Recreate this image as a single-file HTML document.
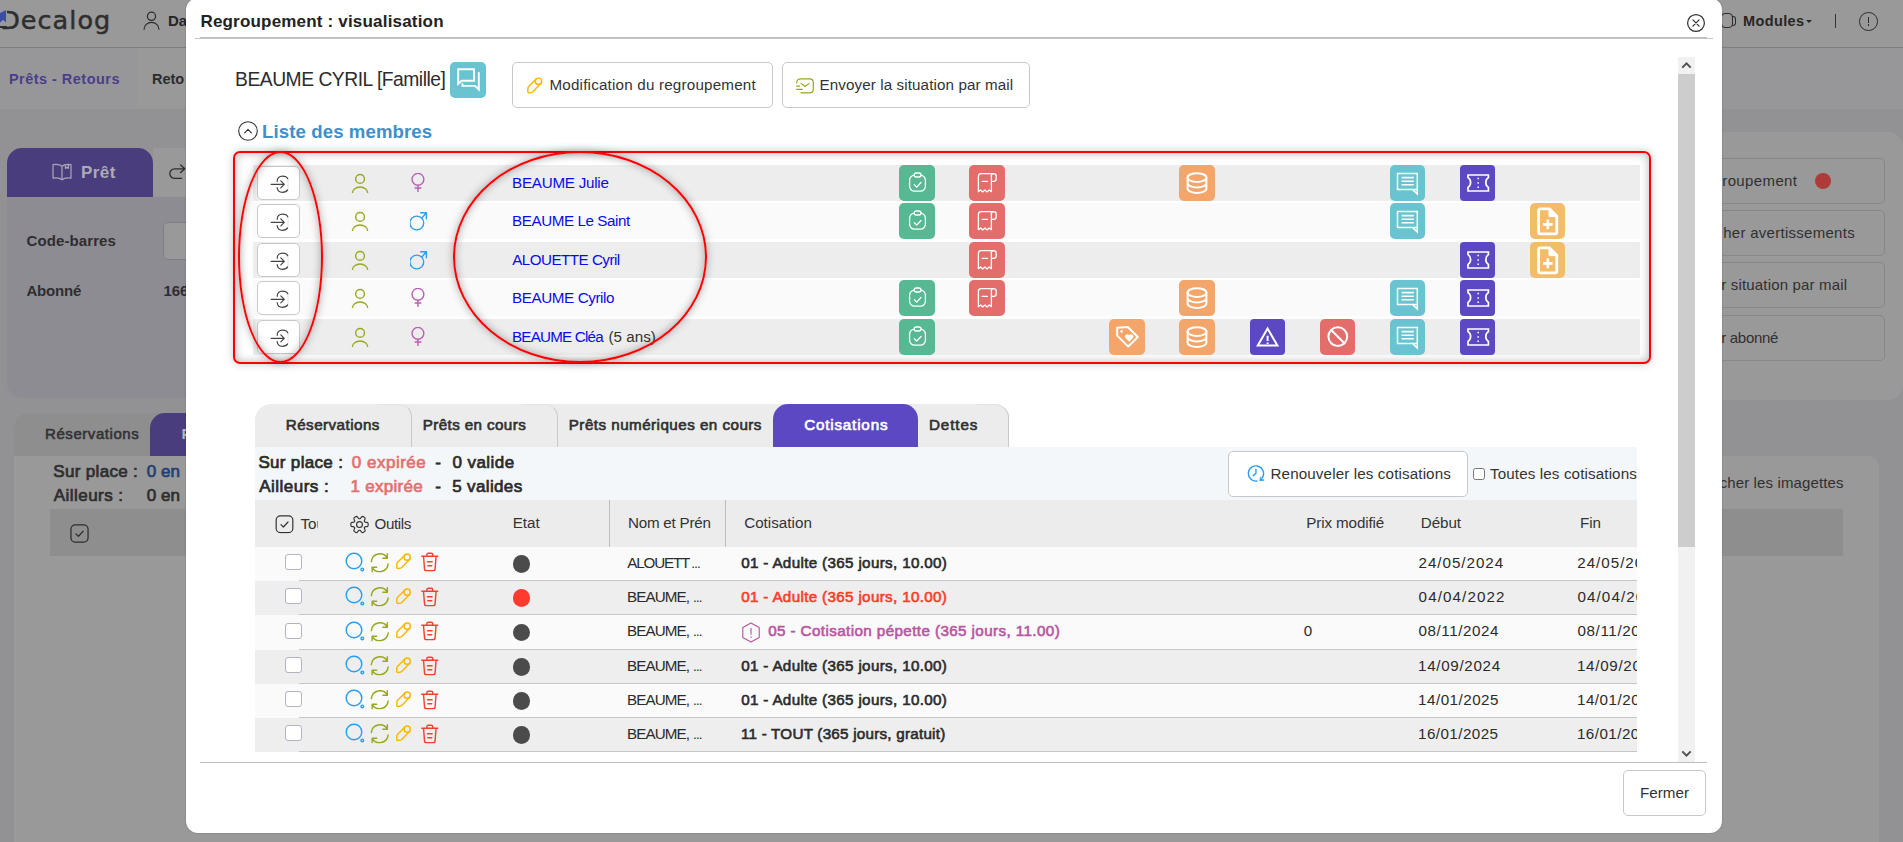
<!DOCTYPE html>
<html lang="fr"><head><meta charset="utf-8"><title>Regroupement : visualisation</title>
<style>
*{box-sizing:border-box}
html,body{margin:0;padding:0}
body{width:1903px;height:842px;overflow:hidden;position:relative;background:#929295;font-family:"Liberation Sans",sans-serif;color:#333}
.a{position:absolute}
.t{position:absolute;white-space:nowrap;line-height:1;color:#333}
svg{position:absolute;overflow:visible}
.ib{position:absolute;width:36px;height:36px;border-radius:5px}
.ib svg{left:0;top:0;width:36px;height:36px;fill:none;stroke:#fff;stroke-width:1.3;stroke-linecap:round;stroke-linejoin:round}
.n{width:35px}.g{background:#57b894}.r{background:#e36d6a}.o{background:#f4a56a}.p{background:#5c48c2;border-radius:4px}.c{background:#69c3d1}.y{background:#f2bc6b}
.mrow{position:absolute;left:253px;width:1387px;height:36px}
.rb{position:absolute;left:257px;width:42.7px;height:33.5px;border:1px solid #c9c9c9;border-radius:5px;background:#fff}
.btn{position:absolute;border:1px solid #c8c8c8;border-radius:5px;background:#fff}
.trow{position:absolute;left:255px;width:1382px}
.tline{position:absolute;left:299px;width:1338px;height:1px;background:#c6c6c6}
.cb{position:absolute;left:285.2px;width:16.5px;height:16.2px;border:1.8px solid #b3b3c2;border-radius:3px;background:#fff}
.dot{position:absolute;left:512.6px;width:17.4px;height:17.4px;border-radius:50%;background:#4b4b4b}
.bbtn{position:absolute;height:46px;border:1px solid #878789;border-radius:5px}
</style></head>
<body>

<svg width="0" height="0" style="position:absolute"><defs>
<symbol id="login" viewBox="0 0 19 19"><path d="M1.2 9.4H14.2M10.8 5.9 14.3 9.4l-3.5 3.5M7.2 6.3C7.2 3.2 9.4 1.1 12.4 1.1c2.6 0 4.6 .900 5.4 2.7M7.2 12.7c.300 2.8 2.4 4.6 5.2 4.6 2.4 0 4.3-.800 5.2-2.4"/><path d="M18 4.4v9.8" opacity=".12"/></symbol>
<symbol id="usr2" viewBox="0 0 18 20"><circle cx="9.06" cy="5.9" r="4.4"/><path d="M1.45 19.75a7.6 5.7 0 0 1 15.2 0"/></symbol>
<symbol id="user" viewBox="0 0 20 20"><circle cx="10" cy="5.6" r="4.3"/><path d="M2.2 19.2a7.8 7.2 0 0 1 15.6 0"/></symbol>
<symbol id="fem" viewBox="0 0 18 20"><circle cx="8.95" cy="6.3" r="5.9"/><path d="M8.95 12.2V18.4M6.1 15H11.9"/></symbol>
<symbol id="mal" viewBox="0 0 18 20"><circle cx="6.8" cy="12" r="6.9"/><path d="M11.7 7.1 16.4 1.8M10.6 1.8H16.4V7.8"/></symbol>
<symbol id="clip" viewBox="0 0 36 36"><rect x="10.6" y="10.2" width="15.8" height="16" rx="5"/><rect x="15.2" y="8" width="6.8" height="4" rx="2" fill="#57b894"/><path d="M15.4 19.8l2.3 2.3 4.3-4.6"/></symbol>
<symbol id="rcpt" viewBox="0 0 36 36"><path d="M9.4 26.6V11.4a2.8 2.8 0 0 1 2.8-2.8h12.6M22.4 26.6V11.6M9.4 26.6l2.2-1.6 2.1 1.9 2.2-1.9 2.2 1.9 2.1-1.9 2.2 1.6M22.4 16.4h2.2a2.6 2.6 0 0 0 2.6-2.6v-2.6a2.6 2.6 0 0 0-2.6-2.6 2.6 2.6 0 0 0-2.4 2.6M13.2 16.4h5.2"/></symbol>
<symbol id="tag" viewBox="0 0 36 36"><path d="M8.2 8.8v7.8l11 11 9.6-9.6-10-10z" stroke-width="2"/><circle cx="12.6" cy="12.4" r="1.4" fill="#fff" stroke="none"/><path d="M20.2 22.8l-3.7-3.7a2.3 2.3 0 0 1 3.3-3.2l.4.4.4-.4a2.3 2.3 0 0 1 3.3 3.2z" fill="#fff" stroke="none"/></symbol>
<symbol id="db" viewBox="0 0 36 36"><g stroke-width="2"><ellipse cx="18" cy="12.6" rx="9.4" ry="4.4"/><path d="M8.6 12.6v11c0 2.4 4.2 4.4 9.4 4.4s9.4-2 9.4-4.4v-11M8.6 18.1c0 2.4 4.2 4.4 9.4 4.4s9.4-2 9.4-4.4"/></g></symbol>
<symbol id="warn" viewBox="0 0 36 36"><path d="M17.6 9.6 7.8 26.4h19.6z" stroke-width="2" stroke-linejoin="miter"/><path d="M17.6 16.8v5.2M17.6 23.6v1.3" stroke-width="2" stroke-linecap="butt"/></symbol>
<symbol id="ban" viewBox="0 0 36 36"><circle cx="17.8" cy="17.6" r="9.4" stroke-width="2"/><path d="M11.2 11 24.4 24.2" stroke-width="2"/></symbol>
<symbol id="cmt" viewBox="0 0 36 36"><path d="M7.5 8.4h19.8v16H7.5zM22.4 24.4l4.9 4.6v-4.6" stroke-width="1.5" stroke-linejoin="miter"/><path d="M11.6 12.6h12.2M11.6 16.2h12.2M11.6 19.8h12.2" stroke-width="1.6" stroke-linecap="butt"/></symbol>
<symbol id="tkt" viewBox="0 0 36 36"><path d="M8 10h20.4v2.6c-1.6 1-2.6 2.8-2.6 4.9s1 3.9 2.6 4.9V26H8v-3.6c1.6-1 2.6-2.8 2.6-4.9S9.6 13.6 8 12.6z" stroke-width="1.7" stroke-linejoin="miter"/><path d="M18.2 12.8v1.5M18.2 17.2v1.5M18.2 21.6v1.5" stroke-width="1.5" stroke-linecap="butt"/></symbol>
<symbol id="doc" viewBox="0 0 36 36"><path d="M8.6 7.4a1.6 1.6 0 0 1 1.6-1.6h9.2l7.4 7.4v16a1.6 1.6 0 0 1-1.6 1.6h-15a1.6 1.6 0 0 1-1.6-1.6z" stroke-width="2.8"/><path d="M19 5.8v7.8h7.8z" fill="#fff" stroke-width="1"/><path d="M17.8 16.6v9.6M13 21.4h9.6" stroke-width="2.6" stroke-linecap="butt"/></symbol>
<symbol id="forum" viewBox="0 0 36 36"><path d="M8.2 7.2h15.8v11.6H11.6L8.2 21.8z" stroke-width="1.9" stroke-linejoin="miter"/><path d="M28.8 11v16.6l-3.8-3.7H12.4v-2" stroke-width="1.9" stroke-linejoin="miter"/></symbol>
<symbol id="srch" viewBox="0 0 20 20"><circle cx="9" cy="9" r="7.8"/><circle cx="17.3" cy="17.4" r="1.3"/></symbol>
<symbol id="rfr" viewBox="0 0 20 20"><path d="M1.4 8.8A8.8 8.8 0 0 1 17.8 5.2M18.6 11.2A8.8 8.8 0 0 1 2.2 14.8M17.8 .8v4.6h-4.6M2.2 19.2v-4.6h4.6"/></symbol>
<symbol id="pen" viewBox="0 0 16 17"><circle cx="11.5" cy="4.3" r="3.2"/><path d="M9.2 2 1.7 9.5C1.1 10.1.9 10.7.9 11.5L.8 14.5C.8 15.4 1.4 16 2.3 15.9L4.6 15.5C5.2 15.4 5.5 15.2 5.9 14.8L13.8 6.6"/></symbol>
<symbol id="trash" viewBox="0 0 18 20"><path d="M.8 4.4h16.4M6 4.2V2.8a1.6 1.6 0 0 1 1.6-1.6h2.8A1.6 1.6 0 0 1 12 2.8v1.4M2.6 4.6l1 12.6a2.2 2.2 0 0 0 2.2 2h6.4a2.2 2.2 0 0 0 2.2-2l1-12.6M6.6 10h4.8M7 14h4"/></symbol>
<symbol id="chk" viewBox="0 0 20 20"><rect x="1" y="1" width="18" height="18" rx="4.5"/><path d="M6.2 10.4l2.6 2.6 5-5.4"/></symbol>
<symbol id="gear" viewBox="0 0 20 20"><circle cx="10" cy="10" r="3.1"/><path d="M19.1 10.0L19.1 10.8L18.9 11.6L18.1 12.2L16.3 12.3L15.6 12.6L15.3 13.0L15.0 13.5L15.2 14.3L15.9 15.9L15.8 16.9L15.2 17.5L14.6 17.9L13.9 18.3L13.1 18.5L12.2 18.1L11.2 16.7L10.5 16.1L10.0 16.1L9.5 16.1L8.8 16.7L7.8 18.1L6.9 18.5L6.1 18.3L5.4 17.9L4.8 17.5L4.2 16.9L4.1 15.9L4.8 14.3L5.0 13.5L4.7 13.0L4.4 12.6L3.7 12.3L1.9 12.2L1.1 11.6L0.9 10.8L0.9 10.0L0.9 9.2L1.1 8.4L1.9 7.8L3.7 7.7L4.4 7.4L4.7 7.0L5.0 6.5L4.8 5.7L4.1 4.1L4.2 3.1L4.8 2.5L5.4 2.1L6.1 1.7L6.9 1.5L7.8 1.9L8.8 3.3L9.5 3.9L10.0 3.9L10.5 3.9L11.2 3.3L12.2 1.9L13.1 1.5L13.9 1.7L14.6 2.1L15.2 2.5L15.8 3.1L15.9 4.1L15.2 5.7L15.0 6.5L15.3 7.0L15.6 7.4L16.3 7.7L18.1 7.8L18.9 8.4L19.1 9.2z"/></symbol>
<symbol id="clk" viewBox="0 0 18 18"><path d="M15.53 12.3A7.6 7.6 0 1 0 10 16.03M8.95 4.2V8.3L6.3 10.6"/><path d="M13.5 12.2 12.7 15.8 16.8 15.4z" fill="#2a9ef0" stroke-width=".6"/></symbol>
<symbol id="mail" viewBox="0 0 19 17"><path d="M.7 5.2C.7 2.5 2.3 1 4.7 1H14.3c2.5 0 4 1.5 4 4v7c0 2.5-1.6 3.9-4 3.9H5.2M.6 8.6h3.3M.6 12h6.1M5.2 5.7l4.3 3.3 4.4-3.3"/></symbol>
<symbol id="hex" viewBox="0 0 18 21"><path d="M9 .9l8.2 4.7v9.8L9 20.1.8 15.4V5.6z"/><path d="M9 6.3v5.9M9 14.9v.6"/></symbol>
</defs></svg>

<!-- page behind the overlay -->
<main>
<div class="a" style="left:0;top:0;width:1903px;height:47px;background:#999"></div>
<div class="a" style="left:0;top:47px;width:1903px;height:1px;background:#7e7e7e"></div>
<div class="a" style="left:0;top:48px;width:1903px;height:61px;background:#979799"></div>
<div class="a" style="left:137px;top:48px;width:80px;height:61px;background:#999"></div>
<span class="t" style="left:0.14px;top:8px;font-size:25.5px;color:#2e2e2e;letter-spacing:1.047px;-webkit-text-stroke:.5px #2e2e2e;font-family:'DejaVu Sans',sans-serif;">Decalog</span>
<div class="a" style="left:0;top:9px;width:7px;height:16.9px;background:#999"></div>
<div class="a" style="left:0;top:25.9px;width:7px;height:2.6px;background:#2e2e2e"></div>
<div class="a" style="left:0;top:10px;width:6.2px;height:12.6px;background:#3a4d9f;clip-path:polygon(100% 0,100% 100%,50% 78%,0 100%,0 24%)"></div>
<svg style="left:141.5px;top:10.5px;fill:none;stroke:#2d2d2d;stroke-width:1.3;stroke-linecap:round;stroke-linejoin:round;" width="19" height="19"><use href="#user"/></svg>
<span class="t" style="left:167.98px;top:13px;font-size:15px;font-weight:700;color:#252525;">Da</span>
<span class="t" style="left:8.95px;top:72px;font-size:14.5px;font-weight:700;color:#4b3e8c;letter-spacing:0.471px;">Prêts - Retours</span>
<span class="t" style="left:151.95px;top:72px;font-size:14.5px;font-weight:700;color:#2b2b2b;">Reto</span>
<div class="a" style="left:1721px;top:13px;width:11.5px;height:15.2px;border:1.4px solid #2d2d2d;border-radius:4px"></div>
<div class="a" style="left:1731.5px;top:16px;width:4px;height:9.6px;border:1.4px solid #2d2d2d;border-left:0;border-radius:0 3px 3px 0"></div>
<span class="t" style="left:1742.95px;top:14px;font-size:14.5px;font-weight:700;color:#262626;letter-spacing:0.399px;">Modules</span>
<div class="a" style="left:1806px;top:19.5px;width:0;height:0;border:3px solid transparent;border-top:3.5px solid #262626"></div>
<div class="a" style="left:1835px;top:14px;width:1.3px;height:14px;background:#333"></div>
<div class="a" style="left:1859px;top:12px;width:18.5px;height:18.5px;border:1.3px solid #2d2d2d;border-radius:50%"></div>
<div class="a" style="left:1867.6px;top:16.5px;width:1.3px;height:6px;background:#2d2d2d"></div><div class="a" style="left:1867.6px;top:24px;width:1.3px;height:1.5px;background:#2d2d2d"></div>
<div class="a" style="left:153px;top:148px;width:120px;height:49px;background:#999"></div>
<div class="a" style="left:7px;top:197px;width:400px;height:200.5px;background:#8d8c93;border-radius:0 0 0 15px"></div>
<div class="a" style="left:7px;top:148px;width:146px;height:49px;background:#4a3d7e;border-radius:15px 15px 0 0"></div>
<svg style="left:52px;top:163px;fill:none;stroke:#a9a7b4;stroke-width:1.2;stroke-linejoin:round" width="20" height="19" viewBox="0 0 20 19"><path d="M10 3.2C8 1.4 4.6 1 1 1.6v13.6c3.6-.600 7-.200 9 1.6 2-1.8 5.4-2.2 9-1.6V1.6C15.4 1 12 1.4 10 3.2zM10 3.2v13.6M13.4 1.4v4l1.5-1.2 1.5 1.2V1"/></svg>
<span class="t" style="left:80.98px;top:164px;font-size:17px;font-weight:700;color:#adabb6;letter-spacing:0.419px;">Prêt</span>
<svg style="left:168px;top:164px;fill:none;stroke:#2d2d2d;stroke-width:1.3;stroke-linecap:round;stroke-linejoin:round" width="18" height="16" viewBox="0 0 18 16"><path d="M12.6 1l4.2 3.8-4.2 3.8M16.4 4.8H6.6a4.8 4.8 0 0 0 0 9.6h7"/></svg>
<span class="t" style="left:26.44px;top:233px;font-size:15px;font-weight:700;color:#2e2e31;letter-spacing:0.112px;">Code-barres</span>
<div class="a" style="left:163px;top:221.5px;width:200px;height:38.5px;background:#999;border:1px solid #7f7f83;border-radius:5px"></div>
<span class="t" style="left:26.40px;top:283px;font-size:15px;font-weight:700;color:#2e2e31;letter-spacing:-0.183px;">Abonné</span>
<span class="t" style="left:163.41px;top:283px;font-size:15px;font-weight:700;color:#2e2e31;">166</span>
<div class="a" style="left:14px;top:413px;width:400px;height:43px;background:#8e8e8e;border-radius:15px 0 0 0"></div>
<div class="a" style="left:14px;top:456px;width:1865px;height:400px;background:#999;border-radius:0 11px 0 0"></div>
<div class="a" style="left:150px;top:413px;width:200px;height:43px;background:#4a3d7e;border-radius:15px 0 0 0"></div>
<span class="t" style="left:45.06px;top:426px;font-size:15px;color:#333338;letter-spacing:0.554px;-webkit-text-stroke:.6px;">Réservations</span>
<span class="t" style="left:181.60px;top:426px;font-size:15px;font-weight:700;color:#b9b6c2;">Prêts en cours</span>
<span class="t" style="left:53.28px;top:463px;font-size:17px;color:#2e2e2e;letter-spacing:0.33px;-webkit-text-stroke:.7px;">Sur place :</span>
<span class="t" style="left:146.86px;top:463px;font-size:17px;color:#243f72;-webkit-text-stroke:.7px;">0 en</span>
<span class="t" style="left:53.70px;top:487px;font-size:17px;color:#2e2e2e;letter-spacing:0.463px;-webkit-text-stroke:.7px;">Ailleurs :</span>
<span class="t" style="left:146.86px;top:487px;font-size:17px;color:#2e2e2e;-webkit-text-stroke:.7px;">0 en</span>
<div class="a" style="left:50px;top:509px;width:300px;height:47px;background:#8e8e8e"></div>
<svg style="left:70px;top:524px;fill:none;stroke:#2d2d2d;stroke-width:1.3;stroke-linecap:round;stroke-linejoin:round;" width="19" height="19"><use href="#chk"/></svg>
<div class="a" style="left:1500px;top:132px;width:403px;height:268px;background:#999;border-radius:0 15px 15px 0"></div>
<div class="bbtn" style="left:1500px;top:158px;width:385px"></div>
<span class="t" style="left:1722.28px;top:173px;font-size:15px;color:#303030;letter-spacing:0.377px;">roupement</span>
<div class="bbtn" style="left:1500px;top:210px;width:385px"></div>
<span class="t" style="left:1723.23px;top:225px;font-size:15px;color:#303030;letter-spacing:0.279px;">her avertissements</span>
<div class="bbtn" style="left:1500px;top:262px;width:385px"></div>
<span class="t" style="left:1721.28px;top:277px;font-size:15px;color:#303030;letter-spacing:0.17px;">r situation par mail</span>
<div class="bbtn" style="left:1500px;top:314.5px;width:385px"></div>
<span class="t" style="left:1721.28px;top:330px;font-size:15px;color:#303030;letter-spacing:-0.303px;">r abonné</span>
<div class="a" style="left:1815px;top:173px;width:16px;height:16px;border-radius:50%;background:#ae3a3a"></div>
<span class="t" style="left:1719.66px;top:475px;font-size:15px;color:#303030;letter-spacing:0.122px;">cher les imagettes</span>
<div class="a" style="left:1500px;top:509px;width:343px;height:46.5px;background:#8e8e8e"></div>
</main>
<!-- modal dialog -->
<section role="dialog" aria-label="Regroupement : visualisation">
<div class="a" style="left:186px;top:-2px;width:1536px;height:835px;background:#fff;border-radius:12px;box-shadow:0 0 2px rgba(0,0,0,.25)"></div>
<span class="t" style="left:200.44px;top:13px;font-size:17px;font-weight:700;color:#222;letter-spacing:0.188px;">Regroupement : visualisation</span>
<svg style="left:1686.1px;top:12.7px;fill:none;stroke:#333;stroke-width:1.25;stroke-linecap:round" width="20" height="20" viewBox="0 0 20 20"><circle cx="10" cy="10" r="8.4"/><path d="M6.9 6.9l6.2 6.2M13.1 6.9l-6.2 6.2"/></svg>
<div class="a" style="left:200px;top:37px;width:1507px;height:2px;background:#bdbdbd"></div>
<div class="a" style="left:195px;top:38px;width:1518px;height:1px;background:#c4c4c4"></div>
<div class="a" style="left:1678px;top:57px;width:17px;height:705px;background:#f1f1f1"></div>
<div class="a" style="left:1678px;top:74px;width:17px;height:473px;background:#cdcdcd"></div>
<svg style="left:1678px;top:57px;fill:none;stroke:#505050;stroke-width:2" width="17" height="17" viewBox="0 0 17 17"><path d="M4.3 10.6l4.2-4.2 4.2 4.2"/></svg>
<svg style="left:1678px;top:745px;fill:none;stroke:#505050;stroke-width:2" width="17" height="17" viewBox="0 0 17 17"><path d="M4.3 6.4l4.2 4.2 4.2-4.2"/></svg>
<span class="t" style="left:235.03px;top:70px;font-size:19.3px;color:#2c2c2c;letter-spacing:-0.487px;">BEAUME CYRIL [Famille]</span>
<div class="ib c" style="left:449.5px;top:62px"><svg><use href="#forum"/></svg></div>
<div class="btn" style="left:512.3px;top:62px;width:260.4px;height:45.6px"></div>
<svg style="left:527px;top:76.5px;fill:none;stroke:#fdb608;stroke-width:1.45;stroke-linecap:round;stroke-linejoin:round;" width="16" height="17"><use href="#pen"/></svg>
<span class="t" style="left:549.44px;top:77px;font-size:15.2px;letter-spacing:0.197px;">Modification du regroupement</span>
<div class="btn" style="left:782px;top:62px;width:248px;height:45.6px"></div>
<svg style="left:795px;top:77.8px;fill:none;stroke:#97a71c;stroke-width:1.3;stroke-linecap:round;stroke-linejoin:round" width="20" height="16" viewBox="0 0 22 18"><use href="#mail"/></svg>
<span class="t" style="left:819.51px;top:77px;font-size:15.2px;letter-spacing:0.101px;">Envoyer la situation par mail</span>
<svg style="left:238px;top:121.3px;fill:none;stroke:#333;stroke-width:1.1;stroke-linecap:round;stroke-linejoin:round" width="20" height="20" viewBox="0 0 20 20"><circle cx="10" cy="10" r="9.3"/><path d="M6.6 11.8l3.4-3.4 3.4 3.4"/></svg>
<span class="t" style="left:262.02px;top:123px;font-size:18.6px;font-weight:700;color:#3f8fc8;letter-spacing:0.106px;">Liste des membres</span>
<div class="a" style="left:233px;top:150.5px;width:1417.5px;height:213px;border:2.2px solid #f00;border-radius:7px;box-shadow:0 0 9px rgba(0,0,0,.22),inset 0 0 10px rgba(0,0,0,.3)"></div>
<div class="mrow" style="top:165px;background:#ededed"></div>
<div class="rb" style="top:166.2px"></div>
<svg style="left:270px;top:174.5px;fill:none;stroke:#444;stroke-width:1.2;stroke-linecap:round;stroke-linejoin:round;" width="19" height="19"><use href="#login"/></svg>
<svg style="left:351px;top:173px;fill:none;stroke:#98a81c;stroke-width:1.4;stroke-linecap:round;stroke-linejoin:round;" width="18" height="20"><use href="#usr2"/></svg>
<svg style="left:409px;top:173.3px;fill:none;stroke:#b860b3;stroke-width:1.4;stroke-linecap:round;stroke-linejoin:round;" width="18" height="20"><use href="#fem"/></svg>
<span class="t" style="left:512.03px;top:175px;font-size:15.2px;color:#0a0aee;letter-spacing:-0.245px;">BEAUME Julie</span>
<div class="ib g" style="left:899px;top:165px"><svg><use href="#clip"/></svg></div>
<div class="ib r" style="left:969px;top:165px"><svg><use href="#rcpt"/></svg></div>
<div class="ib o" style="left:1179px;top:165px"><svg><use href="#db"/></svg></div>
<div class="ib c n" style="left:1390px;top:165px"><svg><use href="#cmt"/></svg></div>
<div class="ib p n" style="left:1460px;top:165px"><svg><use href="#tkt"/></svg></div>
<div class="mrow" style="top:203px;background:#fafafa"></div>
<div class="rb" style="top:204.2px"></div>
<svg style="left:270px;top:212.5px;fill:none;stroke:#444;stroke-width:1.2;stroke-linecap:round;stroke-linejoin:round;" width="19" height="19"><use href="#login"/></svg>
<svg style="left:351px;top:211px;fill:none;stroke:#98a81c;stroke-width:1.4;stroke-linecap:round;stroke-linejoin:round;" width="18" height="20"><use href="#usr2"/></svg>
<svg style="left:410px;top:211px;fill:none;stroke:#2a9ef0;stroke-width:1.4;stroke-linecap:round;stroke-linejoin:round;" width="18" height="20"><use href="#mal"/></svg>
<span class="t" style="left:512.03px;top:213px;font-size:15.2px;color:#0a0aee;letter-spacing:-0.414px;">BEAUME Le Saint</span>
<div class="ib g" style="left:899px;top:203px"><svg><use href="#clip"/></svg></div>
<div class="ib r" style="left:969px;top:203px"><svg><use href="#rcpt"/></svg></div>
<div class="ib c n" style="left:1390px;top:203px"><svg><use href="#cmt"/></svg></div>
<div class="ib y n" style="left:1530px;top:203px"><svg><use href="#doc"/></svg></div>
<div class="mrow" style="top:242px;background:#ededed"></div>
<div class="rb" style="top:243.2px"></div>
<svg style="left:270px;top:251.5px;fill:none;stroke:#444;stroke-width:1.2;stroke-linecap:round;stroke-linejoin:round;" width="19" height="19"><use href="#login"/></svg>
<svg style="left:351px;top:250px;fill:none;stroke:#98a81c;stroke-width:1.4;stroke-linecap:round;stroke-linejoin:round;" width="18" height="20"><use href="#usr2"/></svg>
<svg style="left:410px;top:250px;fill:none;stroke:#2a9ef0;stroke-width:1.4;stroke-linecap:round;stroke-linejoin:round;" width="18" height="20"><use href="#mal"/></svg>
<span class="t" style="left:512.27px;top:252px;font-size:15.2px;color:#0a0aee;letter-spacing:-0.529px;">ALOUETTE Cyril</span>
<div class="ib r" style="left:969px;top:242px"><svg><use href="#rcpt"/></svg></div>
<div class="ib p n" style="left:1460px;top:242px"><svg><use href="#tkt"/></svg></div>
<div class="ib y n" style="left:1530px;top:242px"><svg><use href="#doc"/></svg></div>
<div class="mrow" style="top:280px;background:#fafafa"></div>
<div class="rb" style="top:281.2px"></div>
<svg style="left:270px;top:289.5px;fill:none;stroke:#444;stroke-width:1.2;stroke-linecap:round;stroke-linejoin:round;" width="19" height="19"><use href="#login"/></svg>
<svg style="left:351px;top:288px;fill:none;stroke:#98a81c;stroke-width:1.4;stroke-linecap:round;stroke-linejoin:round;" width="18" height="20"><use href="#usr2"/></svg>
<svg style="left:409px;top:288.3px;fill:none;stroke:#b860b3;stroke-width:1.4;stroke-linecap:round;stroke-linejoin:round;" width="18" height="20"><use href="#fem"/></svg>
<span class="t" style="left:512.03px;top:290px;font-size:15.2px;color:#0a0aee;letter-spacing:-0.387px;">BEAUME Cyrilo</span>
<div class="ib g" style="left:899px;top:280px"><svg><use href="#clip"/></svg></div>
<div class="ib r" style="left:969px;top:280px"><svg><use href="#rcpt"/></svg></div>
<div class="ib o" style="left:1179px;top:280px"><svg><use href="#db"/></svg></div>
<div class="ib c n" style="left:1390px;top:280px"><svg><use href="#cmt"/></svg></div>
<div class="ib p n" style="left:1460px;top:280px"><svg><use href="#tkt"/></svg></div>
<div class="mrow" style="top:319px;background:#ededed"></div>
<div class="rb" style="top:320.2px"></div>
<svg style="left:270px;top:328.5px;fill:none;stroke:#444;stroke-width:1.2;stroke-linecap:round;stroke-linejoin:round;" width="19" height="19"><use href="#login"/></svg>
<svg style="left:351px;top:327px;fill:none;stroke:#98a81c;stroke-width:1.4;stroke-linecap:round;stroke-linejoin:round;" width="18" height="20"><use href="#usr2"/></svg>
<svg style="left:409px;top:327.3px;fill:none;stroke:#b860b3;stroke-width:1.4;stroke-linecap:round;stroke-linejoin:round;" width="18" height="20"><use href="#fem"/></svg>
<span class="t" style="left:512.03px;top:329px;font-size:15.2px;color:#0a0aee;letter-spacing:-0.799px;">BEAUME Cléa</span>
<span class="t" style="left:608.45px;top:329px;font-size:15.2px;letter-spacing:0.017px;">(5 ans)</span>
<div class="ib g" style="left:899px;top:319px"><svg><use href="#clip"/></svg></div>
<div class="ib o" style="left:1109px;top:319px"><svg><use href="#tag"/></svg></div>
<div class="ib o" style="left:1179px;top:319px"><svg><use href="#db"/></svg></div>
<div class="ib p n" style="left:1250px;top:319px"><svg><use href="#warn"/></svg></div>
<div class="ib r n" style="left:1320px;top:319px"><svg><use href="#ban"/></svg></div>
<div class="ib c n" style="left:1390px;top:319px"><svg><use href="#cmt"/></svg></div>
<div class="ib p n" style="left:1460px;top:319px"><svg><use href="#tkt"/></svg></div>
<div class="a" style="left:238px;top:151px;width:85px;height:212px;border:2.2px solid #f00;border-radius:50%;box-shadow:0 0 8px rgba(0,0,0,.3),inset 0 0 9px rgba(0,0,0,.32)"></div>
<div class="a" style="left:453px;top:151px;width:254px;height:212px;border:2.2px solid #f00;border-radius:50%;box-shadow:0 0 8px rgba(0,0,0,.3),inset 0 0 9px rgba(0,0,0,.32)"></div>
<div class="a" style="left:255px;top:404px;width:754px;height:43px;background:#ececec;border-radius:16px 14px 0 0"></div>
<div class="a" style="left:380px;top:404px;width:32px;height:43px;border-right:1px solid #c9c9c9;border-top:1px solid #e2e2e2;border-radius:0 13px 0 0"></div>
<div class="a" style="left:525px;top:404px;width:32.5px;height:43px;border-right:1px solid #c9c9c9;border-top:1px solid #e2e2e2;border-radius:0 13px 0 0"></div>
<div class="a" style="left:977px;top:404px;width:32px;height:43px;border-right:1px solid #c9c9c9;border-top:1px solid #e2e2e2;border-radius:0 14px 0 0"></div>
<div class="a" style="left:773px;top:404px;width:145px;height:43px;background:#5c48c2;border-radius:15px 15px 0 0"></div>
<span class="t" style="left:285.77px;top:417px;font-size:15.2px;color:#303030;letter-spacing:0.455px;-webkit-text-stroke:.65px;">Réservations</span>
<span class="t" style="left:422.77px;top:417px;font-size:15.2px;color:#303030;letter-spacing:0.389px;-webkit-text-stroke:.65px;">Prêts en cours</span>
<span class="t" style="left:568.77px;top:417px;font-size:15.2px;color:#303030;letter-spacing:0.466px;-webkit-text-stroke:.65px;">Prêts numériques en cours</span>
<span class="t" style="left:804.15px;top:417px;font-size:15.2px;color:#fff;letter-spacing:0.822px;-webkit-text-stroke:.65px;">Cotisations</span>
<span class="t" style="left:929.03px;top:417px;font-size:15.2px;color:#303030;letter-spacing:0.888px;-webkit-text-stroke:.65px;">Dettes</span>
<div class="a" style="left:255px;top:447px;width:1382px;height:53px;background:#f4f7fa"></div>
<span class="t" style="left:258.43px;top:454px;font-size:17px;color:#2b2b2b;letter-spacing:0.317px;-webkit-text-stroke:.7px;">Sur place :</span>
<span class="t" style="left:351.86px;top:454px;font-size:17px;color:#e2716f;letter-spacing:0.496px;-webkit-text-stroke:.7px;">0 expirée</span>
<span class="t" style="left:435.37px;top:454px;font-size:17px;color:#2b2b2b;-webkit-text-stroke:.7px;">-</span>
<span class="t" style="left:452.40px;top:454px;font-size:17px;color:#2b2b2b;letter-spacing:0.452px;-webkit-text-stroke:.7px;">0 valide</span>
<span class="t" style="left:259.23px;top:478px;font-size:17px;color:#2b2b2b;letter-spacing:0.482px;-webkit-text-stroke:.7px;">Ailleurs :</span>
<span class="t" style="left:350.55px;top:478px;font-size:17px;color:#e2716f;letter-spacing:0.269px;-webkit-text-stroke:.7px;">1 expirée</span>
<span class="t" style="left:435.37px;top:478px;font-size:17px;color:#2b2b2b;-webkit-text-stroke:.7px;">-</span>
<span class="t" style="left:452.19px;top:478px;font-size:17px;color:#2b2b2b;letter-spacing:0.358px;-webkit-text-stroke:.7px;">5 valides</span>
<div class="btn" style="left:1228px;top:451px;width:240px;height:46px"></div>
<svg style="left:1247px;top:465px;fill:none;stroke:#2a9ef0;stroke-width:1.4;stroke-linecap:round;stroke-linejoin:round;" width="18" height="18"><use href="#clk"/></svg>
<span class="t" style="left:1270.51px;top:466px;font-size:15.2px;letter-spacing:0.123px;">Renouveler les cotisations</span>
<div class="a" style="left:1473px;top:467.7px;width:12px;height:12px;border:1.2px solid #767676;border-radius:2.5px;background:#fff"></div>
<span class="t" style="left:1489.94px;top:466px;font-size:15.2px;letter-spacing:0.122px;">Toutes les cotisations</span>
<div class="a" style="left:255px;top:500px;width:1382px;height:46.7px;background:#ececec"></div>
<div class="a" style="left:609px;top:500px;width:1px;height:46.7px;background:#bdbdbd"></div>
<div class="a" style="left:725px;top:500px;width:1px;height:46.7px;background:#bdbdbd"></div>
<svg style="left:274.8px;top:514.8px;fill:none;stroke:#333;stroke-width:1.3;stroke-linecap:round;stroke-linejoin:round;" width="19" height="18.5"><use href="#chk"/></svg>
<div class="a" style="left:299px;top:510px;width:18.5px;height:28px;overflow:hidden"><span class="t" style="left:1.40px;top:6px;font-size:15.2px;">Tout</span></div>
<svg style="left:349.5px;top:514.5px;fill:none;stroke:#333;stroke-width:1.2;stroke-linecap:round;stroke-linejoin:round;" width="19" height="19"><use href="#gear"/></svg>
<span class="t" style="left:374.55px;top:516px;font-size:15.2px;letter-spacing:-0.399px;">Outils</span>
<span class="t" style="left:512.77px;top:515px;font-size:15.2px;letter-spacing:-0.025px;">Etat</span>
<span class="t" style="left:627.95px;top:515px;font-size:15.2px;letter-spacing:-0.221px;">Nom et Prén</span>
<span class="t" style="left:744.15px;top:515px;font-size:15.2px;letter-spacing:0.019px;">Cotisation</span>
<span class="t" style="left:1306.31px;top:515px;font-size:15.2px;letter-spacing:-0.122px;">Prix modifié</span>
<span class="t" style="left:1420.77px;top:515px;font-size:15.2px;letter-spacing:-0.063px;">Début</span>
<span class="t" style="left:1580.03px;top:515px;font-size:15.2px;letter-spacing:-0.103px;">Fin</span>
<div class="trow" style="top:546.7px;height:34.3px;background:#fafafa"></div>
<div class="tline" style="top:580px"></div>
<div class="cb" style="top:554.15px"></div>
<svg style="left:345.2px;top:552.05px;fill:none;stroke:#2a9ef0;stroke-width:1.45;stroke-linecap:round;stroke-linejoin:round;" width="20" height="20"><use href="#srch"/></svg>
<svg style="left:370px;top:552.85px;fill:none;stroke:#98a81c;stroke-width:1.45;stroke-linecap:round;stroke-linejoin:round;" width="19.5" height="19.5"><use href="#rfr"/></svg>
<svg style="left:395.6px;top:553.35px;fill:none;stroke:#fdb608;stroke-width:1.5;stroke-linecap:round;stroke-linejoin:round;" width="15.6" height="16.6"><use href="#pen"/></svg>
<svg style="left:420.7px;top:552.35px;fill:none;stroke:#f4412f;stroke-width:1.45;stroke-linecap:round;stroke-linejoin:round;" width="17.6" height="19.6"><use href="#trash"/></svg>
<div class="dot" style="top:555.15px;background:#4b4b4b"></div>
<span class="t" style="left:627.32px;top:555px;font-size:15.2px;color:#2b2b2b;letter-spacing:-1.183px;">ALOUETT</span>
<span class="t" style="left:691.42px;top:561px;font-size:9px;font-weight:700;color:#2b2b2b;letter-spacing:-2.447px;">…</span>
<span class="t" style="left:741.15px;top:555px;font-size:15.2px;color:#2b2b2b;letter-spacing:0.342px;-webkit-text-stroke:.6px;">01 - Adulte (365 jours, 10.00)</span>
<span class="t" style="left:1418.55px;top:555px;font-size:15.2px;color:#2b2b2b;letter-spacing:0.957px;">24/05/2024</span>
<div class="a" style="left:1570px;top:548px;width:67px;height:30px;overflow:hidden"><span class="t" style="left:7.27px;top:7px;font-size:15.2px;color:#2b2b2b;letter-spacing:0.975px;">24/05/2024</span></div>
<div class="trow" style="top:581px;height:34px;background:#eeeeee"></div>
<div class="tline" style="top:614px"></div>
<div class="cb" style="top:588.3px"></div>
<svg style="left:345.2px;top:586.2px;fill:none;stroke:#2a9ef0;stroke-width:1.45;stroke-linecap:round;stroke-linejoin:round;" width="20" height="20"><use href="#srch"/></svg>
<svg style="left:370px;top:587px;fill:none;stroke:#98a81c;stroke-width:1.45;stroke-linecap:round;stroke-linejoin:round;" width="19.5" height="19.5"><use href="#rfr"/></svg>
<svg style="left:395.6px;top:587.5px;fill:none;stroke:#fdb608;stroke-width:1.5;stroke-linecap:round;stroke-linejoin:round;" width="15.6" height="16.6"><use href="#pen"/></svg>
<svg style="left:420.7px;top:586.5px;fill:none;stroke:#f4412f;stroke-width:1.45;stroke-linecap:round;stroke-linejoin:round;" width="17.6" height="19.6"><use href="#trash"/></svg>
<div class="dot" style="top:589.3px;background:#ff3b2f"></div>
<span class="t" style="left:627.08px;top:589px;font-size:15.2px;color:#2b2b2b;letter-spacing:-0.915px;">BEAUME,</span>
<span class="t" style="left:693.36px;top:595px;font-size:9px;font-weight:700;color:#2b2b2b;letter-spacing:-2.07px;">…</span>
<span class="t" style="left:741.15px;top:589px;font-size:15.2px;color:#fb3d28;letter-spacing:0.342px;-webkit-text-stroke:.6px;">01 - Adulte (365 jours, 10.00)</span>
<span class="t" style="left:1418.58px;top:589px;font-size:15.2px;color:#2b2b2b;letter-spacing:1.103px;">04/04/2022</span>
<div class="a" style="left:1570px;top:582px;width:67px;height:30px;overflow:hidden"><span class="t" style="left:7.47px;top:7px;font-size:15.2px;color:#2b2b2b;letter-spacing:1.088px;">04/04/2023</span></div>
<div class="trow" style="top:615px;height:35px;background:#fafafa"></div>
<div class="tline" style="top:649px"></div>
<div class="cb" style="top:622.8px"></div>
<svg style="left:345.2px;top:620.7px;fill:none;stroke:#2a9ef0;stroke-width:1.45;stroke-linecap:round;stroke-linejoin:round;" width="20" height="20"><use href="#srch"/></svg>
<svg style="left:370px;top:621.5px;fill:none;stroke:#98a81c;stroke-width:1.45;stroke-linecap:round;stroke-linejoin:round;" width="19.5" height="19.5"><use href="#rfr"/></svg>
<svg style="left:395.6px;top:622px;fill:none;stroke:#fdb608;stroke-width:1.5;stroke-linecap:round;stroke-linejoin:round;" width="15.6" height="16.6"><use href="#pen"/></svg>
<svg style="left:420.7px;top:621px;fill:none;stroke:#f4412f;stroke-width:1.45;stroke-linecap:round;stroke-linejoin:round;" width="17.6" height="19.6"><use href="#trash"/></svg>
<div class="dot" style="top:623.8px;background:#4b4b4b"></div>
<span class="t" style="left:627.08px;top:623px;font-size:15.2px;color:#2b2b2b;letter-spacing:-0.915px;">BEAUME,</span>
<span class="t" style="left:693.36px;top:629px;font-size:9px;font-weight:700;color:#2b2b2b;letter-spacing:-2.07px;">…</span>
<svg style="left:742.4px;top:622.4px;fill:none;stroke:#b955a3;stroke-width:1.15;stroke-linecap:round;stroke-linejoin:round;" width="18" height="21"><use href="#hex"/></svg>
<span class="t" style="left:768.15px;top:623px;font-size:15.2px;color:#b955a3;letter-spacing:0.406px;-webkit-text-stroke:.6px;">05 - Cotisation pépette (365 jours, 11.00)</span>
<span class="t" style="left:1303.67px;top:623px;font-size:15.2px;color:#2b2b2b;">0</span>
<span class="t" style="left:1418.58px;top:623px;font-size:15.2px;color:#2b2b2b;letter-spacing:0.558px;">08/11/2024</span>
<div class="a" style="left:1570px;top:617px;width:67px;height:30px;overflow:hidden"><span class="t" style="left:7.47px;top:6px;font-size:15.2px;color:#2b2b2b;letter-spacing:0.613px;">08/11/2025</span></div>
<div class="trow" style="top:650px;height:34px;background:#eeeeee"></div>
<div class="tline" style="top:683px"></div>
<div class="cb" style="top:657.3px"></div>
<svg style="left:345.2px;top:655.2px;fill:none;stroke:#2a9ef0;stroke-width:1.45;stroke-linecap:round;stroke-linejoin:round;" width="20" height="20"><use href="#srch"/></svg>
<svg style="left:370px;top:656px;fill:none;stroke:#98a81c;stroke-width:1.45;stroke-linecap:round;stroke-linejoin:round;" width="19.5" height="19.5"><use href="#rfr"/></svg>
<svg style="left:395.6px;top:656.5px;fill:none;stroke:#fdb608;stroke-width:1.5;stroke-linecap:round;stroke-linejoin:round;" width="15.6" height="16.6"><use href="#pen"/></svg>
<svg style="left:420.7px;top:655.5px;fill:none;stroke:#f4412f;stroke-width:1.45;stroke-linecap:round;stroke-linejoin:round;" width="17.6" height="19.6"><use href="#trash"/></svg>
<div class="dot" style="top:658.3px;background:#4b4b4b"></div>
<span class="t" style="left:627.08px;top:658px;font-size:15.2px;color:#2b2b2b;letter-spacing:-0.915px;">BEAUME,</span>
<span class="t" style="left:693.36px;top:664px;font-size:9px;font-weight:700;color:#2b2b2b;letter-spacing:-2.07px;">…</span>
<span class="t" style="left:741.15px;top:658px;font-size:15.2px;color:#2b2b2b;letter-spacing:0.342px;-webkit-text-stroke:.6px;">01 - Adulte (365 jours, 10.00)</span>
<span class="t" style="left:1418.04px;top:658px;font-size:15.2px;color:#2b2b2b;letter-spacing:0.68px;">14/09/2024</span>
<div class="a" style="left:1570px;top:651px;width:67px;height:30px;overflow:hidden"><span class="t" style="left:6.96px;top:7px;font-size:15.2px;color:#2b2b2b;letter-spacing:0.687px;">14/09/2025</span></div>
<div class="trow" style="top:684px;height:34px;background:#fafafa"></div>
<div class="tline" style="top:717px"></div>
<div class="cb" style="top:691.3px"></div>
<svg style="left:345.2px;top:689.2px;fill:none;stroke:#2a9ef0;stroke-width:1.45;stroke-linecap:round;stroke-linejoin:round;" width="20" height="20"><use href="#srch"/></svg>
<svg style="left:370px;top:690px;fill:none;stroke:#98a81c;stroke-width:1.45;stroke-linecap:round;stroke-linejoin:round;" width="19.5" height="19.5"><use href="#rfr"/></svg>
<svg style="left:395.6px;top:690.5px;fill:none;stroke:#fdb608;stroke-width:1.5;stroke-linecap:round;stroke-linejoin:round;" width="15.6" height="16.6"><use href="#pen"/></svg>
<svg style="left:420.7px;top:689.5px;fill:none;stroke:#f4412f;stroke-width:1.45;stroke-linecap:round;stroke-linejoin:round;" width="17.6" height="19.6"><use href="#trash"/></svg>
<div class="dot" style="top:692.3px;background:#4b4b4b"></div>
<span class="t" style="left:627.08px;top:692px;font-size:15.2px;color:#2b2b2b;letter-spacing:-0.915px;">BEAUME,</span>
<span class="t" style="left:693.36px;top:698px;font-size:9px;font-weight:700;color:#2b2b2b;letter-spacing:-2.07px;">…</span>
<span class="t" style="left:741.15px;top:692px;font-size:15.2px;color:#2b2b2b;letter-spacing:0.342px;-webkit-text-stroke:.6px;">01 - Adulte (365 jours, 10.00)</span>
<span class="t" style="left:1418.04px;top:692px;font-size:15.2px;color:#2b2b2b;letter-spacing:0.494px;">14/01/2025</span>
<div class="a" style="left:1570px;top:685px;width:67px;height:30px;overflow:hidden"><span class="t" style="left:6.96px;top:7px;font-size:15.2px;color:#2b2b2b;letter-spacing:0.5px;">14/01/2026</span></div>
<div class="trow" style="top:718px;height:34px;background:#eeeeee"></div>
<div class="tline" style="top:751px"></div>
<div class="cb" style="top:725.3px"></div>
<svg style="left:345.2px;top:723.2px;fill:none;stroke:#2a9ef0;stroke-width:1.45;stroke-linecap:round;stroke-linejoin:round;" width="20" height="20"><use href="#srch"/></svg>
<svg style="left:370px;top:724px;fill:none;stroke:#98a81c;stroke-width:1.45;stroke-linecap:round;stroke-linejoin:round;" width="19.5" height="19.5"><use href="#rfr"/></svg>
<svg style="left:395.6px;top:724.5px;fill:none;stroke:#fdb608;stroke-width:1.5;stroke-linecap:round;stroke-linejoin:round;" width="15.6" height="16.6"><use href="#pen"/></svg>
<svg style="left:420.7px;top:723.5px;fill:none;stroke:#f4412f;stroke-width:1.45;stroke-linecap:round;stroke-linejoin:round;" width="17.6" height="19.6"><use href="#trash"/></svg>
<div class="dot" style="top:726.3px;background:#4b4b4b"></div>
<span class="t" style="left:627.08px;top:726px;font-size:15.2px;color:#2b2b2b;letter-spacing:-0.915px;">BEAUME,</span>
<span class="t" style="left:693.36px;top:732px;font-size:9px;font-weight:700;color:#2b2b2b;letter-spacing:-2.07px;">…</span>
<span class="t" style="left:740.91px;top:726px;font-size:15.2px;color:#2b2b2b;letter-spacing:0.245px;-webkit-text-stroke:.6px;">11 - TOUT (365 jours, gratuit)</span>
<span class="t" style="left:1418.04px;top:726px;font-size:15.2px;color:#2b2b2b;letter-spacing:0.446px;">16/01/2025</span>
<div class="a" style="left:1570px;top:719px;width:67px;height:30px;overflow:hidden"><span class="t" style="left:6.96px;top:7px;font-size:15.2px;color:#2b2b2b;letter-spacing:0.459px;">16/01/2026</span></div>
<div class="a" style="left:200px;top:762px;width:1507px;height:1px;background:#bdbdbd"></div>
<div class="btn" style="left:1623px;top:770px;width:83px;height:45.6px"></div>
<span class="t" style="left:1640.03px;top:785px;font-size:15.2px;letter-spacing:0.022px;">Fermer</span>
</section>
</body></html>
